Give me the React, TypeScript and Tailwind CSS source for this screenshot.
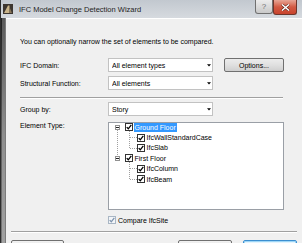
import React from "react";

type Node = { label: string; level: 0 | 1; selected?: boolean };

const tree: Node[] = [
  { label: "Ground Floor", level: 0, selected: true },
  { label: "IfcWallStandardCase", level: 1 },
  { label: "IfcSlab", level: 1 },
  { label: "First Floor", level: 0 },
  { label: "IfcColumn", level: 1 },
  { label: "IfcBeam", level: 1 },
];

function Check({ disabled }: { disabled?: boolean }) {
  return (
    <span
      className={
        disabled
          ? "flex h-[8px] w-[8px] shrink-0 items-center justify-center border border-[#a9b6c4] bg-[#f3f5f8]"
          : "flex h-[8px] w-[8px] shrink-0 items-center justify-center border border-[#333333] bg-white"
      }
    >
      <svg width="6" height="6" viewBox="0 0 6 6">
        <path
          d="M0.7 3.1 L2.3 4.8 L5.3 0.9"
          fill="none"
          stroke={disabled ? "#7d93ad" : "#000000"}
          strokeWidth="1.3"
        />
      </svg>
    </span>
  );
}

function Combo({ value }: { value: string }) {
  return (
    <div className="flex h-[14px] w-[105px] shrink-0 items-center border border-[#c2c2c2] bg-white pl-[3px] pr-[1px]">
      <span className="flex-1 truncate">{value}</span>
      <svg width="4" height="3" viewBox="0 0 4 3">
        <path d="M0 0.2h4L2 2.6z" fill="#000000" />
      </svg>
    </div>
  );
}

function Expander() {
  return (
    <span className="flex h-[5px] w-[5px] shrink-0 items-center justify-center border border-[#919191] bg-white">
      <span className="h-[1px] w-[3px] bg-[#222222]" />
    </span>
  );
}

export default function App() {
  return (
    <div className="flex h-[243px] w-[302px] flex-col overflow-hidden border-l border-[#2e2e2e] font-['Liberation_Sans',sans-serif] text-[7px] leading-[9px] text-black">
      {/* title bar */}
      <div className="flex h-[18px] shrink-0 items-start bg-gradient-to-b from-[#c2c8cf] to-[#d6dadf]">
        <svg className="ml-[2px] mt-[4px]" width="10" height="10" viewBox="0 0 10 10">
          <rect width="10" height="10" fill="#3d3630" />
          <path d="M1 9 L5 1.5 L6.5 1.5 L6.5 9 Z" fill="#c9b48a" />
          <path d="M6.5 3 L9 9 L6.5 9 Z" fill="#8a7658" />
        </svg>
        <span className="ml-[6px] mt-[5px] text-[7.5px] leading-[9px] text-[#1e1e1e]">
          IFC Model Change Detection Wizard
        </span>
        <div className="flex-1" />
        <div className="flex h-[14px] w-[18px] items-center justify-center rounded-b-[3px] border border-t-0 border-[#707070] bg-gradient-to-b from-[#ececec] to-[#c9c9c9] text-[8px] text-[#707070]">
          ?
        </div>
        <div className="flex h-[15px] w-[24px] items-center justify-center rounded-b-[3px] border border-t-0 border-[#6e362c] bg-gradient-to-b from-[#e6a595] via-[#d25a43] to-[#c8432d]">
          <svg width="9" height="7" viewBox="0 0 9 7">
            <path d="M1 0.5 L8 6.5 M8 0.5 L1 6.5" stroke="#5a2218" strokeWidth="2.6" />
            <path d="M1 0.5 L8 6.5 M8 0.5 L1 6.5" stroke="#ffffff" strokeWidth="1.5" />
          </svg>
        </div>
        <div className="w-[5px]" />
      </div>

      <div className="flex flex-1">
        {/* left frame */}
        <div className="flex w-[5px] shrink-0">
          <div className="w-[1px] bg-gradient-to-b from-[#202020] via-[#5c5c5c] to-[#7a7a7a]" />
          <div className="w-[3px] bg-gradient-to-b from-[#5a5a5a] via-[#8e8e8e] to-[#a4a4a4]" />
          <div className="w-[1px] bg-[#7c7c7c]" />
        </div>

        {/* client */}
        <div className="flex flex-1 flex-col border-t border-white bg-[#f0f0f0]">
          <div className="flex flex-col pl-[14px] pr-[18px]">
            <p className="mt-[18px] h-[9px]">You can optionally narrow the set of elements to be compared.</p>

            <div className="mt-[12px] flex h-[14px] items-center">
              <span className="w-[88px] shrink-0">IFC Domain:</span>
              <Combo value="All element types" />
              <button className="ml-[11px] h-[14px] w-[60px] rounded-[2px] border border-[#707070] bg-gradient-to-b from-[#ececec] via-[#e0e0e0] to-[#cfcfcf] text-[7px] leading-[9px]">
                Options...
              </button>
            </div>

            <div className="mt-[4px] flex h-[14px] items-center">
              <span className="w-[88px] shrink-0">Structural Function:</span>
              <Combo value="All elements" />
            </div>

            <div className="mr-[1px] mt-[7px] h-[2px] border-t border-b border-t-[#a0a0a0] border-b-white" />

            <div className="mt-[3px] flex h-[14px] items-center">
              <span className="w-[88px] shrink-0">Group by:</span>
              <Combo value="Story" />
            </div>

            <div className="mt-[6px] flex items-start">
              <span className="-mt-[1px] w-[88px] shrink-0">Element Type:</span>
              <div className="relative h-[88px] w-[176px] border border-[#9a9fa6] bg-white">
                <svg className="absolute left-0 top-0" width="174" height="86">
                  <g stroke="#a0a0a0" strokeWidth="1" strokeDasharray="1 1" fill="none">
                    <path d="M8.5 7 V33" />
                    <path d="M20.5 8 V25.5 M21 14.5 H28 M21 25.5 H28" />
                    <path d="M20.5 39 V56.5 M21 45.5 H28 M21 56.5 H28" />
                  </g>
                </svg>
                <div className="relative -mt-[1px] flex flex-col">
                  {tree.map((n) => (
                    <div
                      key={n.label}
                      className={
                        n.level === 0
                          ? "flex h-[10.4px] items-center pl-[6px]"
                          : "flex h-[10.4px] items-center pl-[28px]"
                      }
                    >
                      {n.level === 0 && (
                        <>
                          <Expander />
                          <span className="w-[5px]" />
                        </>
                      )}
                      <Check />
                      <span
                        className={
                          n.selected
                            ? "ml-[0.5px] bg-[#3399ff] px-[1px] text-white"
                            : "ml-[0.5px] px-[1px]"
                        }
                      >
                        {n.label}
                      </span>
                    </div>
                  ))}
                </div>
              </div>
            </div>

            <div className="ml-[88px] mt-[6px] flex h-[8px] items-center">
              <Check disabled />
              <span className="ml-[2px]">Compare IfcSite</span>
            </div>
          </div>

          <div className="mx-[5px] mt-[7px] h-[2px] border-t border-b border-t-[#a0a0a0] border-b-white" />

          <div className="mt-[7px] flex px-[5px]">
            <div className="h-[14px] w-[53px] rounded-[2px] border border-[#707070] bg-gradient-to-b from-[#f2f2f2] to-[#d6d6d6]" />
            <div className="flex-1" />
            <div className="h-[14px] w-[54px] rounded-[2px] border border-[#707070] bg-gradient-to-b from-[#f2f2f2] to-[#d6d6d6]" />
            <div className="ml-[11px] h-[14px] w-[54px] rounded-[2px] border border-[#3c8fd0] bg-gradient-to-b from-[#eaf6fd] to-[#bee6fd] shadow-[inset_0_0_0_1px_#9fd7f7]" />
          </div>
        </div>
      </div>
    </div>
  );
}
